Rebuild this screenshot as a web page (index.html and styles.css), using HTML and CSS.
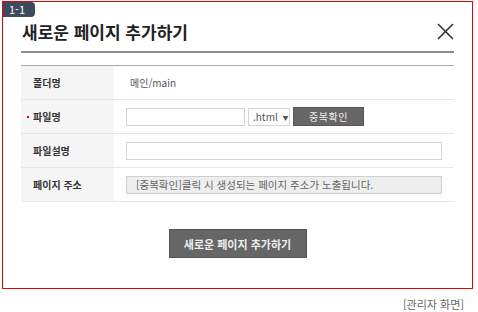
FILE: index.html
```html
<!DOCTYPE html>
<html lang="ko">

<head>
    <meta charset="UTF-8">
    <meta name="viewport" content="width=device-width, initial-scale=1.0">
    <title>새로운 페이지 추가하기</title>
    <link rel="stylesheet" href="styles.css">
</head>

<body>
    <div class="modal">
        <span class="badge">1-1</span>
        <div class="modal-header">
            <h2>새로운 페이지 추가하기</h2>
            <button class="close-btn" type="button">
                <svg width="17" height="17" viewBox="0 0 17 17">
                    <path d="M1 1 L16 16 M16 1 L1 16" stroke="#333" stroke-width="1.6" fill="none" />
                </svg>
            </button>
        </div>
        <table class="form-table">
            <tbody>
                <tr>
                    <th>폴더명</th>
                    <td><span class="value">메인/main</span></td>
                </tr>
                <tr>
                    <th><span class="required"></span>파일명</th>
                    <td>
                        <div class="field-row">
                            <input type="text" class="input input-name">
                            <div class="select">.html <span class="arrow">▼</span></div>
                            <button type="button" class="btn-dark btn-check">중복확인</button>
                        </div>
                    </td>
                </tr>
                <tr>
                    <th>파일설명</th>
                    <td><input type="text" class="input input-wide"></td>
                </tr>
                <tr>
                    <th>페이지 주소</th>
                    <td><div class="input input-wide input-disabled">[중복확인]클릭 시 생성되는 페이지 주소가 노출됩니다.</div></td>
                </tr>
            </tbody>
        </table>
        <div class="modal-footer">
            <button type="button" class="btn-dark btn-submit">새로운 페이지 추가하기</button>
        </div>
    </div>
    <p class="caption">[관리자 화면]</p>
</body>

</html>
```

FILE: styles.css
```css
body {
    margin: 0;
    padding: 0;
    font-family: "Noto Sans CJK KR", "Noto Sans", sans-serif;
    font-size: 10px;
    color: #333;
    background: #fff;
}

.modal,
.modal * {
    box-sizing: border-box;
}

.modal {
    position: relative;
    width: 471px;
    margin: 1px 0 0 2px;
    padding: 0 18px 30px;
    border: 1px solid #e60000;
}

.badge {
    position: absolute;
    top: 0;
    left: 0;
    width: 32px;
    height: 15px;
    line-height: 15px;
    padding-left: 6px;
    background: #3f4a5c;
    color: #fff;
    font-size: 11px;
    border-radius: 0 4px 4px 0;
}

.modal-header {
    display: flex;
    align-items: center;
    justify-content: space-between;
    height: 51px;
    padding-top: 9px;
    border-bottom: 2px solid #8c8c8c;
}

h2 {
    margin: 0 0 0 1px;
    font-size: 17px;
    font-weight: bold;
    color: #222;
}

.close-btn {
    border: none;
    background: none;
    padding: 0;
    width: 17px;
    height: 17px;
    cursor: pointer;
}

.close-btn svg {
    display: block;
}

.form-table {
    width: 100%;
    margin-top: 12px;
    border-collapse: collapse;
    border-top: 1px solid #aaa;
}

.form-table th,
.form-table td {
    height: 34px;
    padding: 0;
    border-bottom: 1px solid #e6e6e6;
    text-align: left;
    vertical-align: middle;
}

.form-table th {
    position: relative;
    width: 93px;
    padding-left: 12px;
    background: #f5f5f5;
    font-weight: bold;
    color: #333;
}

.required {
    position: absolute;
    left: 6px;
    top: 50%;
    width: 2px;
    height: 2px;
    margin-top: -1px;
    background: #e60000;
}

.form-table td {
    padding-left: 12px;
}

.value {
    padding-left: 4px;
    font-size: 10px;
    color: #555;
}

.field-row {
    display: flex;
    align-items: center;
}

.input {
    display: block;
    height: 18px;
    border: 1px solid #d4d4d4;
    background: #fff;
    font-family: inherit;
    font-size: 10px;
}

.input-name {
    width: 119px;
}

.input-wide {
    width: 316px;
}

.input-disabled {
    padding-left: 9px;
    line-height: 16px;
    background: #eee;
    border-color: #d0d0d0;
    color: #666;
    font-size: 10.5px;
    white-space: nowrap;
}

.select {
    width: 42px;
    height: 18px;
    margin-left: 3px;
    padding-left: 4px;
    line-height: 16px;
    border: 1px solid #d4d4d4;
    color: #555;
    font-size: 10px;
}

.arrow {
    font-size: 6px;
    vertical-align: 1px;
    margin-left: 2px;
}

.btn-dark {
    border: 1px solid #555;
    background: #666;
    color: #eee;
    font-family: inherit;
    font-weight: bold;
    cursor: pointer;
}

.btn-check {
    width: 71px;
    height: 19px;
    margin-left: 3px;
    padding: 0;
    font-size: 10px;
    font-weight: normal;
    letter-spacing: 0.5px;
}

.modal-footer {
    display: flex;
    justify-content: center;
    padding-top: 27px;
}

.btn-submit {
    width: 138px;
    height: 29px;
    padding: 0;
    font-size: 11px;
}

.caption {
    margin: 7px 14px 0 0;
    text-align: right;
    font-size: 11px;
    color: #666;
}
```
